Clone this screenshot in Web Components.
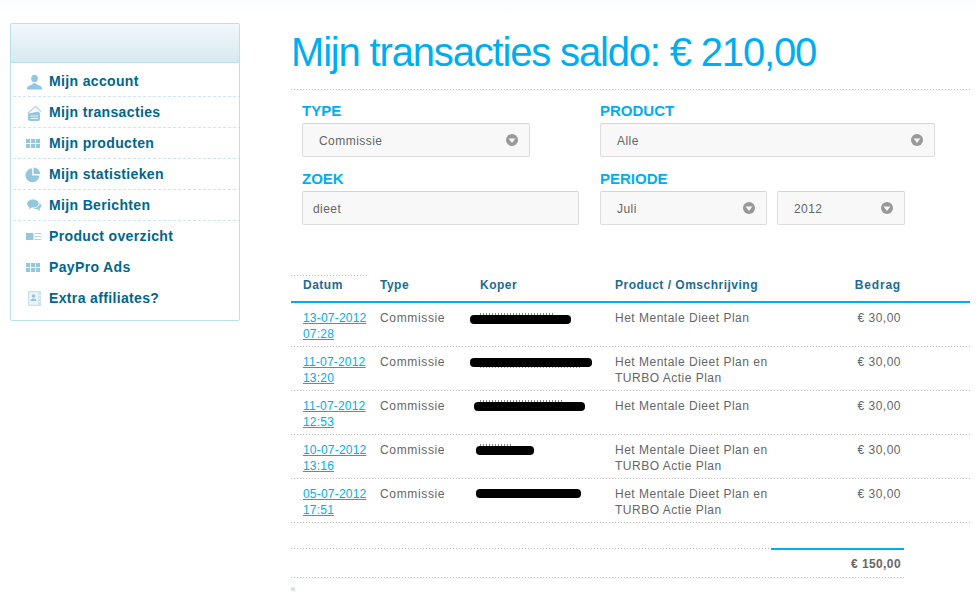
<!DOCTYPE html>
<html lang="nl">
<head>
<meta charset="utf-8">
<title>Mijn transacties</title>
<style>
:root {
  --dots: repeating-linear-gradient(90deg, #bdbdbd 0 1px, transparent 1px 3px);
  --dashes: repeating-linear-gradient(90deg, #cfe6f0 0 3px, transparent 3px 5px);
}
html, body { margin: 0; padding: 0; background: #fff; }
body { font-family: "Liberation Sans", Arial, sans-serif; height: 609px; overflow: hidden; }
</style>
</head>
<body>
<app-page>
  <side-menu slot="side">
    <menu-item icon="user">Mijn account</menu-item>
    <menu-item icon="tray">Mijn transacties</menu-item>
    <menu-item icon="grid">Mijn producten</menu-item>
    <menu-item icon="pie">Mijn statistieken</menu-item>
    <menu-item icon="chat">Mijn Berichten</menu-item>
    <menu-item icon="list" plain>Product overzicht</menu-item>
    <menu-item icon="grid" plain>PayPro Ads</menu-item>
    <menu-item icon="card" plain>Extra affiliates?</menu-item>
  </side-menu>
  <filter-form></filter-form>
  <tx-table></tx-table>
</app-page>

<script>
const ICONS = {
  user: '<ellipse cx="9.500" cy="5.500" rx="3.300" ry="3.800"/><path d="M2 16.500v-1.500c0-1.800 2.600-2.700 5-3.300l1-1.500h3l1 1.500c2.400.6 5 1.500 5 3.300v1.500z"/>',
  tray: '<path d="M2.700 9.300 10.600 2.500 16 7.800" fill="none" stroke="#b5d8e8" stroke-width="1.300"/><path d="M3 9.500 13.500 7.500 15 9.500v5.500a2 2 0 0 1-2 2H5a2 2 0 0 1-2-2z"/><path d="M5.500 11.500h7.500v1H5.500zM5.500 14h7.500v1H5.500z" fill="#e6f2f8"/>',
  grid: '<path d="M1 4h4v4H1zM6 4h4v4H6zM11 4h4v4h-4zM1 9h4v4H1zM6 9h4v4H6zM11 9h4v4h-4z"/>',
  pie: '<path d="M7.200 2.300v7.200h7.200A7 7 0 1 1 7.200 2.300z"/><path d="M8.600 1.500a6.500 6.500 0 0 1 6.400 6.600H8.600z"/>',
  chat: '<path d="M8 2.500C4.800 2.500 2.200 4.300 2.200 6.700c0 1.400.9 2.600 2.200 3.300l-.6 2.200 3-1.600H8c3.200 0 5.700-1.600 5.700-3.900S11.200 2.500 8 2.500z"/><path d="M14.800 6.200c.9.700 1.500 1.600 1.500 2.600 0 1.100-.7 2.100-1.800 2.700l.5 2.400-2.800-1.800c-1.500.1-2.900-.2-3.800-.9 3 0 5.900-1.500 6.400-5z"/>',
  list: '<rect x="1" y="5" width="7.500" height="7"/><path d="M9.500 5H16v1H9.500zM9.500 8H16v1H9.500zM9.500 11H16v1H9.500z" opacity=".75"/>',
  card: '<rect x="3" y="1" width="13" height="15" opacity=".5"/><rect x="4.300" y="2.300" width="9" height="12.400" fill="#eef6fa"/><circle cx="8.500" cy="6" r="1.800"/><path d="M5.500 11c0-1.700 1.300-2.500 3-2.500s3 .8 3 2.500z"/><path d="M14 5h1.500v1H14zM14 8h1.500v1H14zM14 11h1.500v1H14z" fill="#eef6fa"/>'
};

class AppPage extends HTMLElement {
  constructor() {
    super();
    this.attachShadow({ mode: 'open' }).innerHTML = `<style>
:host { display: flex; align-items: flex-start; background: linear-gradient(#fafcfe, #fff 14px); }
aside { width: 230px; margin: 23px 51px 0 10px; flex: none; }
main { width: 679px; flex: none; }
h1 {
  margin: 0;
  padding-top: 28px;
  height: 90px;
  box-sizing: border-box;
  background: var(--dots) bottom left / 100% 1px no-repeat;
  font-weight: normal;
  font-size: 40px;
  line-height: 48px;
  letter-spacing: -1.17px;
  color: #00aeef;
  white-space: nowrap;
}
</style>
<aside><slot name="side"></slot></aside>
<main><h1>Mijn transacties saldo: € 210,00</h1><slot></slot></main>`;
  }
}

class SideMenu extends HTMLElement {
  constructor() {
    super();
    this.attachShadow({ mode: 'open' }).innerHTML = `<style>
:host { display: block; }
.box { border: 1px solid #bcdfec; border-radius: 2px; height: 298px; box-sizing: border-box; }
.head { height: 39px; box-sizing: border-box; border-bottom: 1px solid #bcdfec; background: linear-gradient(#f2f7fa, #d6e9f1); }
nav { padding: 3px 0 0 2px; }
</style>
<div class="box"><div class="head"></div><nav><slot></slot></nav></div>`;
  }
}

class MenuItem extends HTMLElement {
  constructor() {
    super();
    const icon = ICONS[this.getAttribute('icon')] || '';
    this.attachShadow({ mode: 'open' }).innerHTML = `<style>
:host { display: flex; align-items: center; height: 31px; box-sizing: border-box; padding: 0 0 1px 12px;
  font-size: 14px; font-weight: bold; letter-spacing: .35px; color: #00668f; }
:host(:not([plain])) { background: var(--dashes) bottom left / 100% 1px no-repeat; }
svg { width: 17px; height: 17px; fill: #93c6df; flex: none; margin-right: 7px; }
</style>
<svg viewBox="0 0 17 17">${icon}</svg><slot></slot>`;
  }
}

class SelectBox extends HTMLElement {
  constructor() {
    super();
    this.attachShadow({ mode: 'open' }).innerHTML = `<style>
:host { display: flex; align-items: center; justify-content: space-between; box-sizing: border-box; height: 34px;
  padding: 0 11px 0 16px; background: #f8f8f8; border: 1px solid #ddd; border-top-color: #d4d4d4; border-radius: 2px;
  font-size: 12px; letter-spacing: .45px; color: #666; }
span { padding-top: 1px; }
svg { width: 12px; height: 12px; flex: none; }
</style>
<span><slot></slot></span>
<svg viewBox="0 0 13 13"><circle cx="6.500" cy="6.500" r="6.500" fill="#999"/><path d="M2.800 4.800h7.400L6.500 9.800z" fill="#f8f8f8"/></svg>`;
  }
}

class TextBox extends HTMLElement {
  constructor() {
    super();
    this.attachShadow({ mode: 'open' }).innerHTML = `<style>
:host { display: flex; align-items: center; box-sizing: border-box; height: 34px; padding: 1px 10px 0;
  background: #f8f8f8; border: 1px solid #ddd; border-top-color: #d4d4d4; border-radius: 2px;
  font-size: 12px; letter-spacing: .45px; color: #666; }
</style><slot></slot>`;
  }
}

class FilterField extends HTMLElement {
  constructor() {
    super();
    this.attachShadow({ mode: 'open' }).innerHTML = `<style>
:host { display: block; }
label { display: block; height: 17px; line-height: 17px; font-size: 15px; font-weight: bold;
  color: #00aeef; margin-bottom: 4px; }
.row { display: flex; gap: 10px; }
</style>
<label></label><div class="row"><slot></slot></div>`;
    this.shadowRoot.querySelector('label').textContent = this.getAttribute('label');
  }
}

class FilterForm extends HTMLElement {
  constructor() {
    super();
    this.attachShadow({ mode: 'open' }).innerHTML = `<style>
:host { display: grid; grid-template-columns: 298px 1fr; row-gap: 13px; padding: 12px 0 0 11px; height: 185px; box-sizing: border-box; align-content: start; }
.type { width: 228px; }
.zoek { width: 277px; }
.product { width: 335px; }
.maand { width: 167px; }
.jaar { width: 128px; }
</style>
<filter-field label="TYPE"><select-box class="type">Commissie</select-box></filter-field>
<filter-field label="PRODUCT"><select-box class="product">Alle</select-box></filter-field>
<filter-field label="ZOEK"><text-box class="zoek">dieet</text-box></filter-field>
<filter-field label="PERIODE"><select-box class="maand">Juli</select-box><select-box class="jaar">2012</select-box></filter-field>`;
  }
}

const COLS = 'grid-template-columns: 77px 100px 135px 200px 86px;';

class TxRow extends HTMLElement {
  constructor() {
    super();
    const a = n => this.getAttribute(n);
    const peek = a('peek').split(',');
    this.attachShadow({ mode: 'open' }).innerHTML = `<style>
:host { display: grid; ${COLS} height: 44px; box-sizing: border-box; padding-left: 12px; padding-top: 7px;
  background: var(--dots) bottom left / 100% 1px no-repeat;
  font-size: 12px; line-height: 16px; letter-spacing: .5px; color: #666; position: relative; }
a { color: #00aeef; text-decoration: underline; letter-spacing: .2px; }
.type { letter-spacing: .65px; }
.product { padding-right: 30px; }
.bedrag { text-align: right; }
.blot { position: absolute; background: #000; height: 8.500px; border-radius: 4px; }
.peek { position: absolute; height: 2px; background: repeating-linear-gradient(90deg, #888 0 1px, transparent 1px 3px); }
</style>
<div><a href="#">${a('datum')}<br>${a('tijd')}</a></div>
<div class="type">Commissie</div>
<div></div>
<div class="product">${a('product')}</div>
<div class="bedrag">€ 30,00</div>
<div class="peek" style="left:189px;top:${peek[0]}px;width:${peek[1]}px"></div>
<div class="blot" style="left:${a('blot-x')}px;top:${a('blot-y')}px;width:${a('blot-w')}px"></div>`;
  }
}

class TxTable extends HTMLElement {
  constructor() {
    super();
    const rows = [
      ['13-07-2012', '07:28', 'Het Mentale Dieet Plan', 179, 12, 101, '10,73'],
      ['11-07-2012', '13:20', 'Het Mentale Dieet Plan en TURBO Actie Plan', 179, 11, 122, '19,101'],
      ['11-07-2012', '12:53', 'Het Mentale Dieet Plan', 183, 11, 111, '9,82'],
      ['10-07-2012', '13:16', 'Het Mentale Dieet Plan en TURBO Actie Plan', 185, 11, 58, '9,33'],
      ['05-07-2012', '17:51', 'Het Mentale Dieet Plan en TURBO Actie Plan', 185, 10, 105, '18,0']
    ].map(r => `<tx-row datum="${r[0]}" tijd="${r[1]}" product="${r[2]}" blot-x="${r[3]}" blot-y="${r[4]}" blot-w="${r[5]}" peek="${r[6]}"></tx-row>`).join('');
    this.attachShadow({ mode: 'open' }).innerHTML = `<style>
:host { display: block; }
.top { width: 76px; height: 1px; background: var(--dots); }
.head { display: grid; ${COLS} height: 27px; box-sizing: border-box; padding: 1px 0 0 12px; border-bottom: 2px solid #00aeef;
  font-size: 12px; line-height: 16px; font-weight: bold; letter-spacing: .5px; color: #1d6b93; }
.right { text-align: right; letter-spacing: .8px; }
.foot { margin-top: 25px; }
.sum { display: flex; justify-content: flex-end; width: 613px; height: 30px; box-sizing: border-box;
  background: var(--dots) top left / 100% 1px no-repeat, var(--dots) bottom left / 100% 1px no-repeat; position: relative; }
.bar { position: absolute; left: 480px; width: 133px; top: 0; height: 2px; background: #00aeef; }
.total { font-size: 12px; font-weight: bold; letter-spacing: .4px; color: #666; line-height: 16px; padding: 8px 3px 0 0; }
.mark { width: 4px; height: 4px; margin-top: 9px; background: #cfe6f0; border-radius: 2px 2px 0 0; }
</style>
<div class="top"></div>
<div class="head"><div>Datum</div><div>Type</div><div>Koper</div><div>Product / Omschrijving</div><div class="right">Bedrag</div></div>
<div>${rows}</div>
<div class="foot"><div class="sum"><div class="bar"></div><div class="total">€ 150,00</div></div><div class="mark"></div></div>`;
  }
}

customElements.define('app-page', AppPage);
customElements.define('side-menu', SideMenu);
customElements.define('menu-item', MenuItem);
customElements.define('select-box', SelectBox);
customElements.define('text-box', TextBox);
customElements.define('filter-field', FilterField);
customElements.define('filter-form', FilterForm);
customElements.define('tx-row', TxRow);
customElements.define('tx-table', TxTable);
</script>
</body>
</html>
